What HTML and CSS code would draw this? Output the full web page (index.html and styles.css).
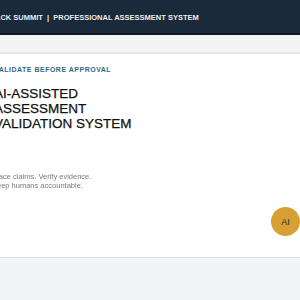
FILE: index.html
```html
<!DOCTYPE html>
<html lang="en">
<head>
  <meta charset="UTF-8" />
  <meta name="viewport" content="width=device-width, initial-scale=1.0" />
  <title>Track Summit</title>
  <link rel="stylesheet" href="styles.css">
</head>
<body>
  <div class="page">
    <header class="topbar">
      <span class="brand">TRACK SUMMIT &nbsp;|&nbsp; PROFESSIONAL ASSESSMENT SYSTEM</span>
    </header>
    <div class="subbar"></div>

    <section class="hero">
      <p class="kicker">VALIDATE BEFORE APPROVAL</p>
      <h1>AI-ASSISTED<br>ASSESSMENT<br>VALIDATION SYSTEM</h1>
      <p class="lead">Trace claims. Verify evidence. Keep humans accountable.</p>
    </section>

    <div class="rest"></div>
  </div>

  <button class="ai-btn" title="Assistant">AI</button>
</body>
</html>
```

FILE: styles.css
```css
html, body {
  margin: 0;
  padding: 0;
  height: 100%;
  overflow: hidden;
  background-color: #f3f4f6;
  font-family: 'Liberation Sans', Arial, sans-serif;
  -webkit-font-smoothing: antialiased;
}

.page {
  margin-left: -24px;
}

.topbar {
  height: 33px;
  background-color: #1b2a3a;
  border-bottom: 2px solid #111a24;
  display: flex;
  align-items: center;
  padding-left: 9px;
}

.brand {
  color: #eef2f6;
  font-size: 7.5px;
  font-weight: bold;
  white-space: nowrap;
  padding-top: 1px;
  text-shadow: 0 0 1px rgba(0, 0, 0, 0.6);
}

.subbar {
  height: 17px;
  background-color: #f3f4f6;
  border-bottom: 2px solid #e2e6e9;
}

.hero {
  background-color: #fff;
  height: 192px;
  padding: 11px 0 0 18px;
  border-bottom: 1px solid #dde1e6;
}

.kicker {
  margin: 0;
  font-size: 7px;
  line-height: 10px;
  letter-spacing: 0.5px;
  color: #2f6a85;
  font-weight: bold;
}

h1 {
  margin: 11px 0 0;
  font-size: 13.5px;
  line-height: 15px;
  font-weight: normal;
  color: #111;
  -webkit-text-stroke: 0.25px #111;
}

.lead {
  margin: 41px 0 0 -2px;
  max-width: 118px;
  font-size: 7.5px;
  line-height: 9px;
  color: #7a7a7a;
  will-change: transform;
}

.rest {
  height: 42px;
}

.ai-btn {
  position: absolute;
  left: 271px;
  top: 207px;
  width: 29px;
  height: 29px;
  border-radius: 50%;
  border: none;
  padding: 0;
  background-color: #d8a033;
  color: #1f2933;
  font-family: 'Liberation Sans', Arial, sans-serif;
  font-size: 9px;
  cursor: pointer;
}
```
